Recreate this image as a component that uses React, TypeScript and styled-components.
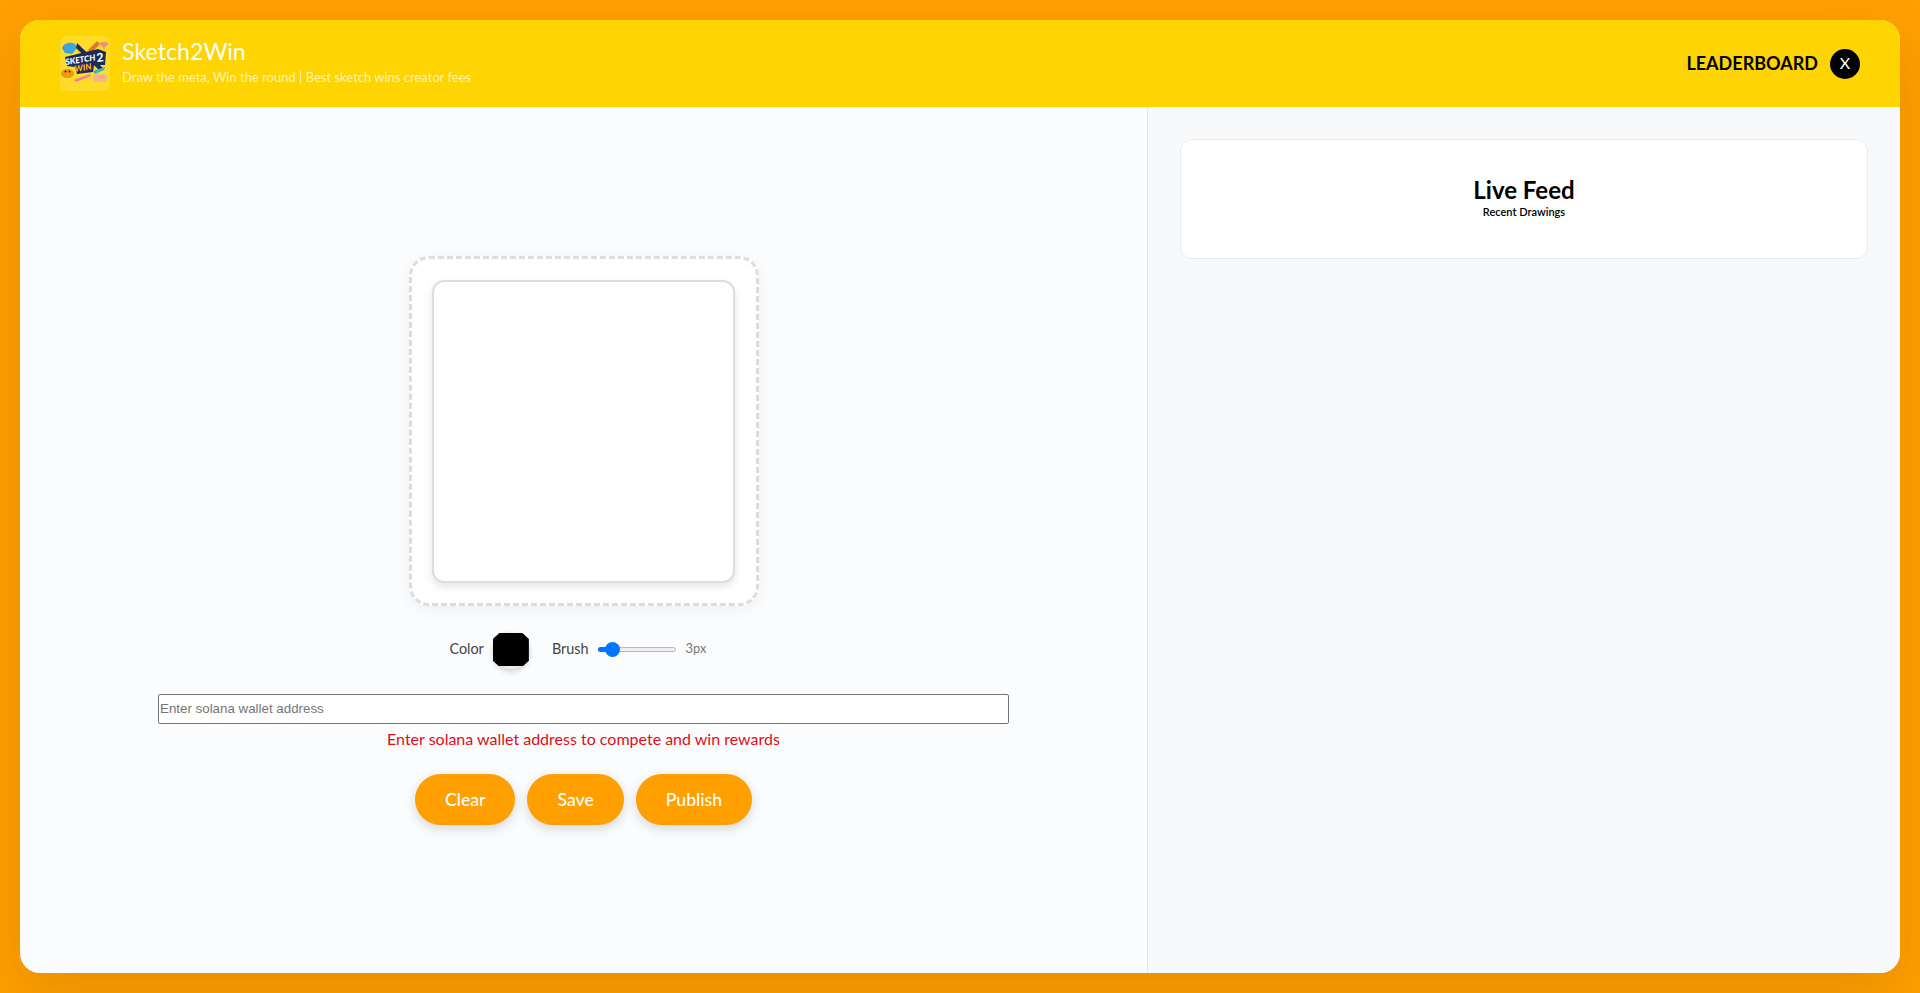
import React from "react";
import styled, { createGlobalStyle } from "styled-components";

const Global = createGlobalStyle`
  html, body { margin: 0; height: 100%; }
  body { font-family: Lato, "Liberation Sans", sans-serif; background: #ff9f00; }
  * { box-sizing: border-box; }
`;

const Page = styled.div`
  width: 100%;
  height: 100vh;
  padding: 20px;
  background: #ff9f00;
`;
const Shell = styled.div`
  height: 100%;
  display: flex;
  flex-direction: column;
  border-radius: 20px;
  overflow: hidden;
  background: #fbfcfe;
  box-shadow: 0 20px 60px rgba(0, 0, 0, 0.1);
`;
const Header = styled.header`
  height: 87px;
  flex: none;
  display: flex;
  align-items: center;
  justify-content: space-between;
  padding: 0 40px;
  background: #ffd403;
`;
const Brand = styled.div`
  display: flex;
  align-items: center;
  gap: 12px;
`;
const Logo = styled.svg`
  width: 50px;
  height: 55px;
  display: block;
`;
const BrandText = styled.div`
  display: flex;
  flex-direction: column;
  margin-top: -5px;
`;
const Title = styled.h1`
  margin: 0;
  font-size: 23.2px;
  line-height: 28px;
  font-weight: 400;
  color: #fff;
`;
const Subtitle = styled.p`
  margin: 4px 0 0;
  font-size: 13px;
  line-height: 16px;
  color: rgba(255, 255, 255, 0.72);
`;
const HeaderLinks = styled.div`
  display: flex;
  align-items: center;
  gap: 12px;
`;
const Leaderboard = styled.a`
  font-size: 18px;
  font-weight: 700;
  color: #000;
  margin-top: -2px;
`;
const XButton = styled.a`
  width: 30px;
  height: 30px;
  padding-bottom: 3px;
  border-radius: 50%;
  background: #000;
  color: #fff;
  font-size: 16px;
  display: flex;
  align-items: center;
  justify-content: center;
`;
const Main = styled.main`
  flex: 1;
  min-height: 0;
  display: grid;
  grid-template-columns: 1128px 1fr;
`;
const DrawColumn = styled.section`
  display: flex;
  flex-direction: column;
  align-items: center;
  border-right: 1px solid #e3e5e8;
  padding-top: 149px;
`;
const Frame = styled.div`
  width: 350px;
  height: 350px;
  display: flex;
  align-items: center;
  justify-content: center;
  background: #fff;
  border: 3px dashed #ddd;
  border-radius: 20px;
  box-shadow: 0 4px 16px rgba(0, 0, 0, 0.05);
`;
const Canvas = styled.div`
  width: 303px;
  height: 303px;
  background: #fff;
  border: 2px solid #ddd;
  border-radius: 12px;
  box-shadow: 0 4px 8px rgba(0, 0, 0, 0.1);
`;
const Tools = styled.div`
  display: flex;
  align-items: center;
  height: 32px;
  margin-top: 26px;
  font-size: 14.4px;
  color: #444;
`;
const ToolLabel = styled.span`
  margin-right: 9px;
`;
const Swatch = styled.div`
  width: 36px;
  height: 36px;
  margin: 6px 23px 0 0;
  border-radius: 50%;
  background: #eee;
  box-shadow: 0 2px 6px rgba(0, 0, 0, 0.2);
  position: relative;
  &::after {
    content: "";
    position: absolute;
    left: 0;
    top: 0;
    width: 36px;
    height: 33px;
    background: #000;
    clip-path: polygon(18% 0, 82% 0, 100% 18%, 100% 84%, 84% 100%, 16% 100%, 0 84%, 0 18%);
  }
`;
const Slider = styled.div`
  width: 78px;
  height: 5px;
  margin: 2px 10px 0 0;
  position: relative;
  background: #efeff3;
  border: 1px solid #b9b9b9;
  border-radius: 3px;
`;
const SliderFill = styled.div`
  position: absolute;
  left: -1px;
  top: -1px;
  width: 14px;
  height: 5px;
  border-radius: 3px 0 0 3px;
  background: #0075ff;
`;
const SliderThumb = styled.div`
  position: absolute;
  left: 6px;
  top: -6px;
  width: 15px;
  height: 15px;
  border-radius: 50%;
  background: #0075ff;
`;
const BrushValue = styled.span`
  min-width: 32px;
  font-size: 12.8px;
  color: #777;
`;
const WalletInput = styled.input`
  width: 851px;
  height: 30px;
  margin-top: 30px;
  padding: 0 1px 1px;
  font-family: "Liberation Sans", Arial, sans-serif;
  font-size: 13.33px;
  background: #fff;
  border: 1px solid #767676;
  border-radius: 2px;
  outline: none;
  &::placeholder { color: #757575; opacity: 1; }
`;
const WalletError = styled.p`
  margin: 5px 0 0;
  font-size: 16px;
  line-height: 19px;
  color: #e00d1a;
`;
const Actions = styled.div`
  display: flex;
  gap: 12px;
  margin-top: 26px;
`;
const ActionButton = styled.button`
  height: 51px;
  padding: 0 30px;
  border: none;
  border-radius: 25.5px;
  background: #ff9f00;
  color: #fff;
  font-family: inherit;
  font-size: 17.6px;
  font-weight: 500;
  box-shadow: 0 4px 12px rgba(0, 0, 0, 0.15);
`;
const FeedColumn = styled.aside`
  background: #f8f9fa;
  padding: 32px;
`;
const FeedCard = styled.div`
  height: 120px;
  padding-bottom: 6px;
  display: flex;
  flex-direction: column;
  align-items: center;
  justify-content: center;
  background: #fff;
  border: 1px solid #e9ecef;
  border-radius: 12px;
`;
const FeedTitle = styled.h2`
  margin: 0;
  font-size: 24px;
  line-height: 29px;
  font-weight: 700;
  color: #000;
`;
const FeedSubtitle = styled.p`
  margin: 1px 0 0;
  font-size: 11px;
  line-height: 13px;
  font-weight: 600;
  color: #000;
`;

const LogoArt = () => (
  <Logo viewBox="0 0 50 55" aria-label="Sketch2Win logo">
    <rect width="50" height="55" rx="7" fill="#ffdb2a" />
    <path d="M2 12 C3 8 9 5 15 8 L17 12 L12 18 L5 17 Z" fill="#3fa3dd" />
    <path d="M17 7 L44 33 L40 35 L16 12 Z" fill="#1c2c5a" />
    <path d="M28 14 L37 5 L40 8 L31 17 Z" fill="#e9752b" />
    <path d="M39 8 C41 5 47 5 49 8 L45 11 L44 15 L43 11 Z" fill="#ee8f80" />
    <path d="M5 21 L38 13 L46 16 L45 29 L34 29 L33 36 L17 38 L15 31 L7 30 Z" fill="#1c2c5a" />
    <path d="M14 44 L30 38 L31 40 L16 46 Z" fill="#ef7aa8" />
    <path d="M33 35 L45 31 L44 34 L35 38 Z" fill="#35b6c4" />
    <text x="6" y="29" fontFamily="Lato, sans-serif" fontWeight="900" fontStyle="italic" fontSize="8.4" fill="#fff" transform="rotate(-9 6 29)">SKETCH</text>
    <text x="37" y="26" fontFamily="Lato, sans-serif" fontWeight="900" fontSize="12" fill="#fff" transform="rotate(-6 37 26)">2</text>
    <text x="15" y="36" fontFamily="Lato, sans-serif" fontWeight="900" fontStyle="italic" fontSize="8.6" fill="#ffb21a" transform="rotate(-9 15 36)">WIN</text>
    <ellipse cx="7.5" cy="37.5" rx="6.5" ry="4.5" fill="#f2961a" />
    <circle cx="5.5" cy="35.5" r="1" fill="#3a2a10" />
    <circle cx="9.5" cy="35.5" r="1" fill="#3a2a10" />
    <circle cx="37" cy="42" r="4" fill="#f4b48c" />
    <circle cx="43" cy="42" r="4" fill="#f4b48c" />
  </Logo>
);

export default function App() {
  return (
    <>
      <Global />
      <Page>
        <Shell>
          <Header>
            <Brand>
              <LogoArt />
              <BrandText>
                <Title>Sketch2Win</Title>
                <Subtitle>Draw the meta, Win the round | Best sketch wins creator fees</Subtitle>
              </BrandText>
            </Brand>
            <HeaderLinks>
              <Leaderboard>LEADERBOARD</Leaderboard>
              <XButton>X</XButton>
            </HeaderLinks>
          </Header>
          <Main>
            <DrawColumn>
              <Frame>
                <Canvas />
              </Frame>
              <Tools>
                <ToolLabel>Color</ToolLabel>
                <Swatch />
                <ToolLabel>Brush</ToolLabel>
                <Slider>
                  <SliderFill />
                  <SliderThumb />
                </Slider>
                <BrushValue>3px</BrushValue>
              </Tools>
              <WalletInput placeholder="Enter solana wallet address" />
              <WalletError>Enter solana wallet address to compete and win rewards</WalletError>
              <Actions>
                <ActionButton>Clear</ActionButton>
                <ActionButton>Save</ActionButton>
                <ActionButton>Publish</ActionButton>
              </Actions>
            </DrawColumn>
            <FeedColumn>
              <FeedCard>
                <FeedTitle>Live Feed</FeedTitle>
                <FeedSubtitle>Recent Drawings</FeedSubtitle>
              </FeedCard>
            </FeedColumn>
          </Main>
        </Shell>
      </Page>
    </>
  );
}
